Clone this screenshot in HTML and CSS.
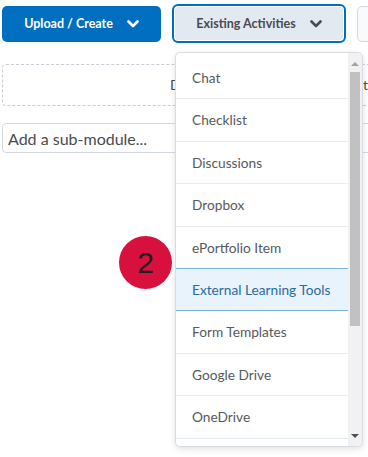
FILE: index.html
```html
<!DOCTYPE html>
<html lang="en">
<head>
  <meta charset="UTF-8">
  <meta name="viewport" content="width=device-width, initial-scale=1.0">
  <title>Add Existing Activities</title>
  <link rel="stylesheet" href="styles.css">
</head>
<body>
  <div class="page">
    <div class="toolbar">
      <button class="btn btn-primary">Upload / Create
        <svg class="chevron" viewBox="0 0 12 8" width="12" height="8"><path d="M1.5 1.5 L6 6 L10.5 1.5" /></svg>
      </button>
      <button class="btn btn-secondary">Existing Activities
        <svg class="chevron" viewBox="0 0 12 8" width="12" height="8"><path d="M1.5 1.5 L6 6 L10.5 1.5" /></svg>
      </button>
      <button class="btn btn-plain"></button>
    </div>

    <div class="content">
      <div class="dropzone">Drag and drop files here to create and update topics</div>
      <input type="text" class="submodule" placeholder="Add a sub-module...">
    </div>

    <div class="menu">
      <ul class="menu-list">
        <li>Chat</li>
        <li>Checklist</li>
        <li>Discussions</li>
        <li>Dropbox</li>
        <li>ePortfolio Item</li>
        <li class="active">External Learning Tools</li>
        <li>Form Templates</li>
        <li>Google Drive</li>
        <li>OneDrive</li>
        <li></li>
      </ul>
      <div class="scrollbar">
        <span class="arrow arrow-up"></span>
        <span class="thumb"></span>
        <span class="arrow arrow-down"></span>
      </div>
    </div>

    <div class="step">2</div>
  </div>
</body>
</html>
```

FILE: styles.css
```css
* {
  margin: 0;
  padding: 0;
  box-sizing: border-box;
}

body {
  font-family: Lato, "Open Sans", sans-serif;
  background-color: #fff;
  width: 368px;
  height: 457px;
  overflow: hidden;
}

.page {
  position: relative;
  width: 368px;
  height: 457px;
  overflow: hidden;
}

.toolbar {
  display: flex;
  align-items: center;
  padding: 4px 0 0 2px;
  height: 43px;
  white-space: nowrap;
}

.btn {
  font-family: Lato, sans-serif;
  font-size: 12.5px;
  font-weight: 700;
  border-radius: 5px;
  display: flex;
  align-items: center;
  justify-content: center;
  gap: 14px;
  flex-shrink: 0;
}

.btn-primary {
  width: 159px;
  height: 36px;
  background-color: #006fbf;
  color: #fff;
  border: none;
}

.btn-primary .chevron {
  stroke: #fff;
}

.btn-secondary {
  margin-left: 11px;
  width: 174px;
  height: 39px;
  background-color: #e3e9f1;
  color: #494c4e;
  border: 2px solid #006fbf;
  border-radius: 6px;
  box-shadow: inset 0 0 0 1px #fff;
}

.btn-secondary .chevron {
  stroke: #494c4e;
}

.btn-plain {
  margin-left: 11px;
  width: 80px;
  height: 36px;
  background-color: #f9fafb;
  border: 1px solid #d3d9e3;
}

.chevron {
  fill: none;
  stroke-width: 2.6;
  stroke-linecap: round;
  stroke-linejoin: round;
}

.content {
  width: 430px;
  padding-left: 2px;
}

.dropzone {
  margin-top: 21px;
  height: 42px;
  border: 1px dashed #c9ced6;
  border-radius: 4px;
  padding-left: 167px;
  line-height: 40px;
  font-size: 14px;
  color: #494c4e;
  white-space: nowrap;
  overflow: hidden;
}

.submodule {
  display: block;
  margin-top: 17px;
  width: 100%;
  height: 30px;
  border: 1px solid #d3d9e3;
  border-radius: 4px;
  padding-left: 5px;
  font-family: Lato, sans-serif;
  font-size: 16px;
  background-color: #fff;
}

.submodule::placeholder {
  color: #494c4e;
}

.menu {
  position: absolute;
  left: 175px;
  top: 52px;
  width: 188px;
  height: 395px;
  background-color: #fff;
  border: 1px solid #d8dde4;
  border-radius: 5px;
  box-shadow: 0 2px 6px rgba(0, 0, 0, 0.12);
  display: flex;
  overflow: hidden;
}

.menu-list {
  list-style: none;
  flex: 1;
  padding-top: 4px;
  overflow: hidden;
}

.menu-list li {
  height: 42.4px;
  line-height: 41.4px;
  padding-left: 16px;
  font-size: 13.7px;
  color: #565a5c;
  border-bottom: 1px solid #e8ecf1;
  white-space: nowrap;
}

.menu-list li.active {
  background-color: #e8f3fb;
  color: #2b6a9e;
  border-top: 1px solid #7cb2de;
  border-bottom: 1px solid #7cb2de;
  margin-top: -1px;
  height: 43.4px;
}

.scrollbar {
  position: relative;
  width: 14px;
  background-color: #f1f1f1;
}

.thumb {
  position: absolute;
  left: 2px;
  right: 2px;
  top: 19px;
  height: 254px;
  background-color: #c1c1c1;
}

.arrow {
  position: absolute;
  left: 3px;
  width: 0;
  height: 0;
  border-left: 4px solid transparent;
  border-right: 4px solid transparent;
}

.arrow-up {
  top: 9px;
  border-bottom: 4px solid #a3a3a3;
}

.arrow-down {
  bottom: 8px;
  border-top: 4px solid #505050;
}

.step {
  position: absolute;
  left: 119px;
  top: 236px;
  width: 53px;
  height: 53px;
  border-radius: 50%;
  background-color: #d7103d;
  color: #1e1e1e;
  font-family: "Liberation Sans", Arial, sans-serif;
  font-size: 30px;
  line-height: 53px;
  text-align: center;
}
```
